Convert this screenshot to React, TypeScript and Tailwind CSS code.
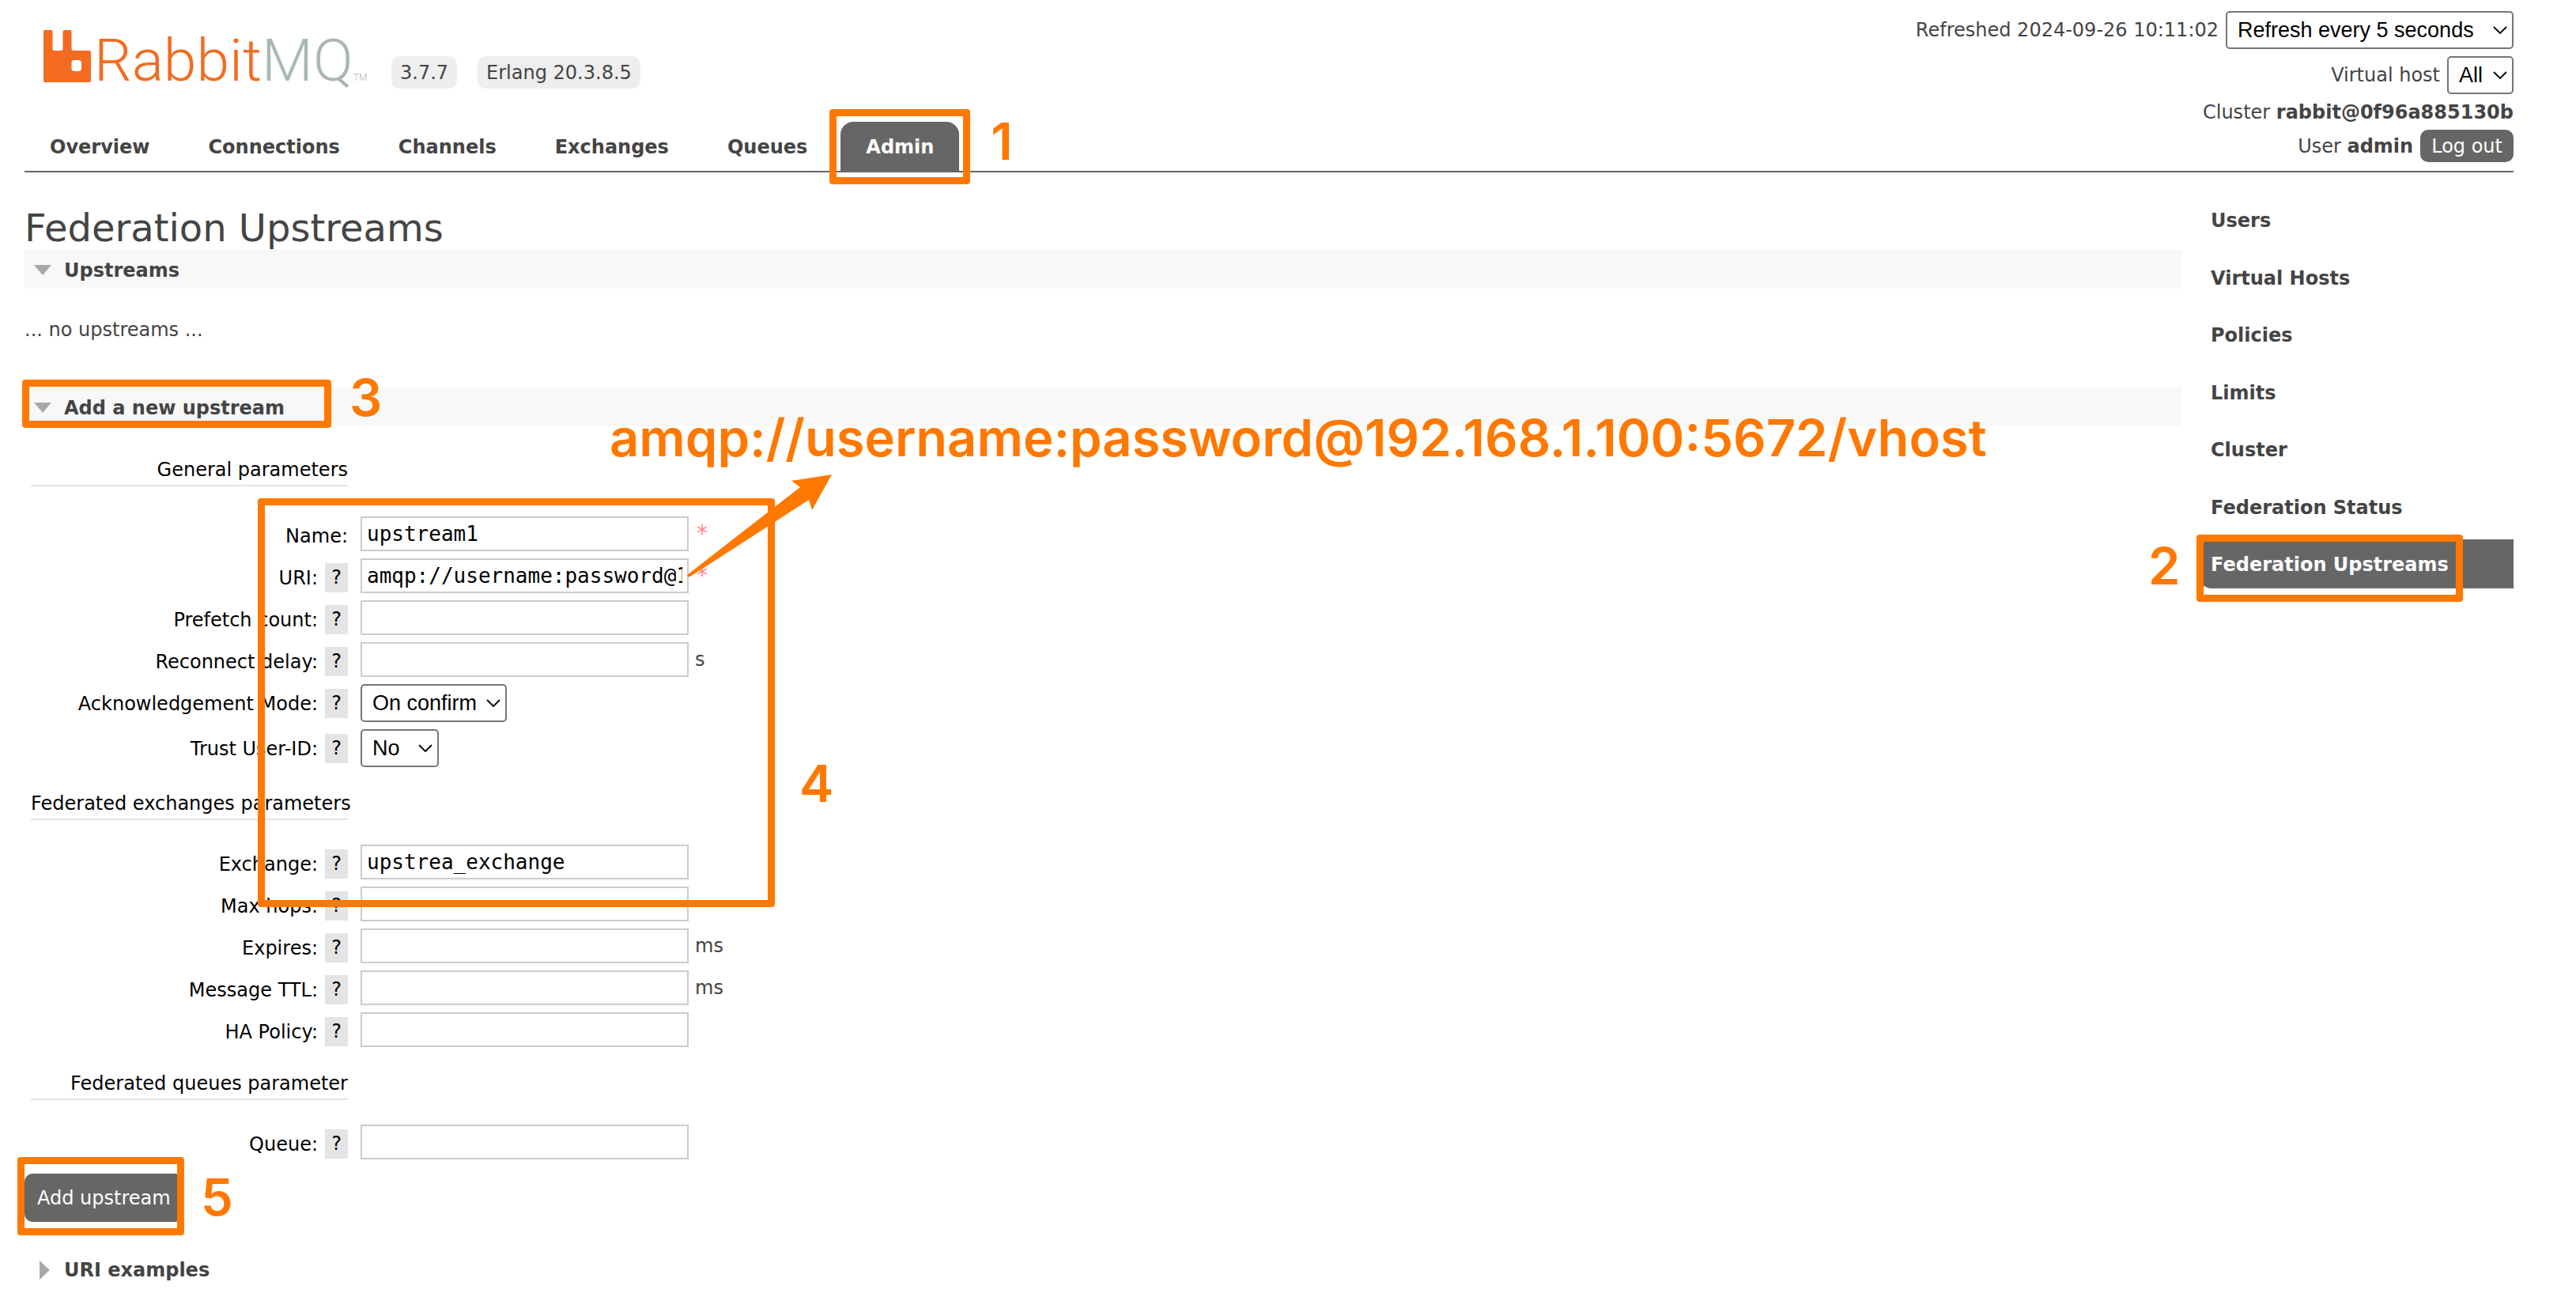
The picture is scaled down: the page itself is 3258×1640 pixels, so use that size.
import React from "react";

const TABS = ["Overview", "Connections", "Channels", "Exchanges", "Queues", "Admin"];

const ADMIN_LINKS = [
  "Users",
  "Virtual Hosts",
  "Policies",
  "Limits",
  "Cluster",
  "Federation Status",
  "Federation Upstreams",
];

function Logo() {
  return (
    <a href="#" aria-label="RabbitMQ" className="flex h-[80px] items-start">
      <svg viewBox="0 0 60 66" className="mt-[8px] h-[66px] w-[60px] shrink-0" fill="#f36b21">
        <path
          fillRule="evenodd"
          d="M1.500 0H9.500Q11.500 0 11.500 2V23.500Q11.500 26 14 26H22Q24.500 26 24.500 23.500V2Q24.500 0 26.500 0H33.500Q35.500 0 35.500 2V24Q35.500 26 38 26H58Q60 26 60 28V64Q60 66 58 66H1.500Q0 66 0 64V2Q0 0 1.500 0ZM39 38Q35.500 38 35.500 41.500V48.500Q35.500 52 39 52H44.500Q48 52 48 48.500V41.500Q48 38 44.500 38Z"
        />
      </svg>
      <span className="ml-[4px] font-['Roboto',sans-serif] text-[75px] leading-[92px] font-light text-[#f36b21]">
        Rabbit<span className="text-[#a9b8b1]">MQ</span>
      </span>
      <span className="mt-[60px] font-['Roboto',sans-serif] text-[12px] leading-[16px] font-light text-[#a9b8b1]">
        TM
      </span>
    </a>
  );
}

function Marker({ box, digit, digitPos }: { box: string; digit: string; digitPos: string }) {
  return (
    <>
      <span className={"pointer-events-none absolute z-10 rounded-[4px] border-[9px] border-[#ff7800] " + box} />
      <span
        className={
          "pointer-events-none absolute z-10 font-['Inter',sans-serif] text-[65px] leading-[64px] font-semibold text-[#ff7800] " +
          digitPos
        }
      >
        {digit}
      </span>
    </>
  );
}

function Select({ id, options, width }: { id: string; options: string[]; width: string }) {
  return (
    <span className={"relative inline-block " + width}>
      <select
        id={id}
        className="block h-[48px] w-full appearance-none rounded-[5px] border-2 border-[#767676] bg-white pl-[13px] font-['Liberation_Sans',sans-serif] text-[27px] leading-[40px] text-black"
      >
        {options.map((o) => (
          <option key={o}>{o}</option>
        ))}
      </select>
      <svg
        viewBox="0 0 18 10"
        className="pointer-events-none absolute top-[19px] right-[8px] h-[10px] w-[18px]"
        fill="none"
        stroke="#111"
        strokeWidth="2"
      >
        <path d="M1 1L9 9L17 1" />
      </svg>
    </span>
  );
}

function Group({
  id,
  title,
  className,
  children,
}: {
  id: string;
  title: string;
  className: string;
  children: React.ReactNode;
}) {
  return (
    <div role="group" aria-labelledby={id} className={className}>
      <h3 id={id} className="w-[401px] border-b-2 border-[#e4e4e4] text-right leading-[38px] whitespace-nowrap text-black">
        {title}
      </h3>
      <div className="flex flex-col gap-[9px]">{children}</div>
    </div>
  );
}

function Row({
  id,
  label,
  help = true,
  suffix,
  required,
  children,
}: {
  id: string;
  label: string;
  help?: boolean;
  suffix?: string;
  required?: boolean;
  children: React.ReactNode;
}) {
  return (
    <div className="flex items-start gap-[16px]">
      <div className="flex w-[401px] items-start justify-end gap-[9px] pt-[6px] text-black">
        <label htmlFor={id} className="pt-[1px] leading-[37px] whitespace-nowrap">
          {label}:
        </label>
        {help && (
          <button
            type="button"
            aria-label={"Help: " + label}
            className="h-[37px] w-[29px] bg-[#e4e4e4] text-center leading-[37px]"
          >
            ?
          </button>
        )}
      </div>
      <div className="flex items-center gap-[8px]">
        {children}
        {suffix && <span>{suffix}</span>}
        {required && <span className="pl-[2px] text-[28px] text-[#ff8888]">*</span>}
      </div>
    </div>
  );
}

function TextField({ id, value = "" }: { id: string; value?: string }) {
  return (
    <input
      id={id}
      type="text"
      defaultValue={value}
      className="h-[44px] w-[415px] border-2 border-[#ccc] bg-white px-[6px] font-['DejaVu_Sans_Mono',monospace] text-[26px] text-black"
    />
  );
}

function SectionBar({ title, open = true }: { title: string; open?: boolean }) {
  return (
    <h2 className={open ? "bg-[#f8f8f8]" : ""}>
      <button type="button" aria-expanded={open} className="flex h-[49px] w-full items-center pt-[2px] pl-[12px] font-bold">
        <span className="flex w-[38px] items-center">
          {open ? (
            <svg viewBox="0 0 22 13" className="h-[13px] w-[22px]" fill="#a8a8a8">
              <path d="M0 0H22L11 13Z" />
            </svg>
          ) : (
            <svg viewBox="0 0 13 24" className="ml-[7px] h-[24px] w-[13px]" fill="#a8a8a8">
              <path d="M0 0L13 12L0 24Z" />
            </svg>
          )}
        </span>
        {title}
      </button>
    </h2>
  );
}

export default function App() {
  return (
    <div className="min-h-screen bg-white pr-[79px] pl-[31px] font-['Verdana','DejaVu_Sans',sans-serif] text-[24px] leading-[36px] text-[#444]">
      <header className="flex items-end justify-between border-b-2 border-[#666]">
        <div>
          <div className="flex items-start pl-[24px]">
            <div className="w-[440px]">
              <Logo />
            </div>
            <div className="mt-[41px] flex gap-[26px]">
              <span className="rounded-[10px] bg-[#eee] px-[11px] pt-[1px] leading-[40px]">3.7.7</span>
              <span className="rounded-[10px] bg-[#eee] px-[11px] pt-[1px] leading-[40px]">Erlang 20.3.8.5</span>
            </div>
          </div>
          <nav className="mt-[42px] flex gap-[10px]">
            {TABS.map((t) =>
              t === "Admin" ? (
                <div key={t} className="relative">
                  <a
                    href="#"
                    aria-current="page"
                    className="block rounded-t-[16px] bg-[#666] px-[32px] pt-[2px] leading-[60px] font-bold text-white"
                  >
                    {t}
                  </a>
                  <Marker
                    box="-top-[16px] -bottom-[17px] -left-[14px] -right-[14px]"
                    digit="1"
                    digitPos="-top-[7px] left-[190px]"
                  />
                </div>
              ) : (
                <a key={t} href="#" className="block px-[32px] pt-[2px] leading-[60px] font-bold">
                  {t}
                </a>
              )
            )}
          </nav>
        </div>
        <div className="flex flex-col items-end pt-[14px] pb-[11px]">
          <div className="flex items-center gap-[9px]">
            <label htmlFor="refresh">Refreshed 2024-09-26 10:11:02</label>
            <Select id="refresh" width="w-[364px]" options={["Refresh every 5 seconds"]} />
          </div>
          <div className="mt-[9px] flex items-center gap-[9px]">
            <label htmlFor="vhost">Virtual host</label>
            <Select id="vhost" width="w-[84px]" options={["All"]} />
          </div>
          <div className="mt-[5px]">
            Cluster <b>rabbit@0f96a885130b</b>
          </div>
          <div className="mt-[4px] flex items-center">
            <span>
              User <b>admin</b>
            </span>
            <button type="button" className="ml-[9px] rounded-[10px] bg-[#666] px-[14px] pt-[1px] leading-[40px] text-white">
              Log out
            </button>
          </div>
        </div>
      </header>

      <div className="flex items-start gap-[22px]">
        <main className="min-w-0 flex-1 pt-[46px]">
          <h1 className="pb-[4px] text-[48px] leading-[48px]">Federation Upstreams</h1>
          <SectionBar title="Upstreams" />
          <p className="mt-[34px]">... no upstreams ...</p>

          <div className="relative mt-[55px]">
            <SectionBar title="Add a new upstream" />
            <Marker
              box="-top-[10px] -left-[3px] h-[61px] w-[391px]"
              digit="3"
              digitPos="-top-[19px] left-[411px]"
            />

            <form className="pl-[8px]">
              <div className="relative flex flex-col gap-[27px] pt-[36px]">
                <Group id="general" title="General parameters" className="flex flex-col gap-[38px]">
                  <Row id="name" label="Name" help={false} required>
                    <TextField id="name" value="upstream1" />
                  </Row>
                  <Row id="uri" label="URI" required>
                    <TextField id="uri" value="amqp://username:password@192.168.1.100:5672/vhost" />
                  </Row>
                  <Row id="prefetch" label="Prefetch count">
                    <TextField id="prefetch" />
                  </Row>
                  <Row id="reconnect" label="Reconnect delay" suffix="s">
                    <TextField id="reconnect" />
                  </Row>
                  <Row id="ack" label="Acknowledgement Mode">
                    <Select id="ack" width="w-[185px]" options={["On confirm", "On publish", "No ack"]} />
                  </Row>
                  <Row id="trust" label="Trust User-ID">
                    <Select id="trust" width="w-[99px]" options={["No", "Yes"]} />
                  </Row>
                </Group>

                <Group id="exchanges" title="Federated exchanges parameters" className="flex flex-col gap-[31px]">
                  <Row id="exchange" label="Exchange">
                    <TextField id="exchange" value="upstrea_exchange" />
                  </Row>
                  <Row id="hops" label="Max hops">
                    <TextField id="hops" />
                  </Row>
                  <Row id="expires" label="Expires" suffix="ms">
                    <TextField id="expires" />
                  </Row>
                  <Row id="ttl" label="Message TTL" suffix="ms">
                    <TextField id="ttl" />
                  </Row>
                  <Row id="ha" label="HA Policy">
                    <TextField id="ha" />
                  </Row>
                </Group>

                <Group id="queues" title="Federated queues parameter" className="flex flex-col gap-[31px]">
                  <Row id="queue" label="Queue">
                    <TextField id="queue" />
                  </Row>
                </Group>

                <Marker
                  box="top-[91px] left-[287px] h-[517px] w-[654px]"
                  digit="4"
                  digitPos="top-[420px] left-[972px]"
                />
                <span className="pointer-events-none absolute -top-[21px] left-[732px] z-10 font-['Inter',sans-serif] text-[65px] leading-[72px] font-semibold whitespace-nowrap text-[#ff7800]">
                  amqp://username:password@192.168.1.100:5672/vhost
                </span>
                <svg
                  viewBox="0 0 184 130"
                  className="pointer-events-none absolute top-[61px] left-[830px] z-10 h-[130px] w-[184px]"
                  fill="#ff7800"
                >
                  <path d="M183 0L132 8L143 16L0 127Q1 130 4 129L154 32L158 45Z" />
                </svg>
              </div>

              <div className="relative mt-[18px] -ml-[8px]">
                <button type="submit" className="block rounded-[10px] bg-[#666] px-[16px] pt-[1px] leading-[60px] text-white">
                  Add upstream
                </button>
                <Marker
                  box="-top-[21px] -left-[9px] h-[99px] w-[211px]"
                  digit="5"
                  digitPos="-top-[2px] left-[223px]"
                />
              </div>
            </form>
          </div>

          <div className="mt-[35px]">
            <SectionBar title="URI examples" open={false} />
          </div>
        </main>

        <nav className="mt-[29px] flex h-[497px] w-[398px] flex-col justify-between">
          {ADMIN_LINKS.map((l) =>
            l === "Federation Upstreams" ? (
              <div key={l} className="relative">
                <a
                  href="#"
                  aria-current="page"
                  className="block rounded-l-[16px] bg-[#666] pt-[2px] pl-[15px] leading-[60px] font-bold text-white"
                >
                  {l}
                </a>
                <Marker
                  box="-top-[6px] -left-[3px] h-[85px] w-[337px]"
                  digit="2"
                  digitPos="top-[2px] -left-[64px]"
                />
              </div>
            ) : (
              <a key={l} href="#" className="block pt-[2px] pl-[15px] leading-[60px] font-bold">
                {l}
              </a>
            )
          )}
        </nav>
      </div>
    </div>
  );
}
